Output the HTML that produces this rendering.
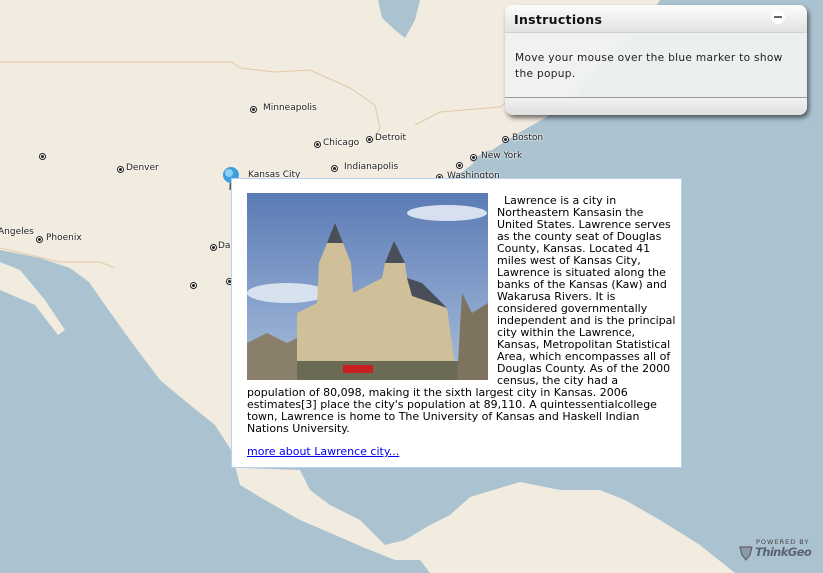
<!DOCTYPE html>
<html><head><meta charset="utf-8"><style>
body{margin:0;width:823px;height:573px;overflow:hidden;position:relative;background:#abc3d0;font-family:"DejaVu Sans","Liberation Sans",sans-serif}
.c{position:absolute;font-size:9px;color:#222;white-space:nowrap;text-shadow:0 0 2px #fff,0 0 2px #fff}
.d{position:absolute;width:5px;height:5px;border:1.5px solid #222;border-radius:50%;background:#fff}
.d:after{content:"";position:absolute;left:1px;top:1px;width:3px;height:3px;border-radius:50%;background:#222}
#pop{position:absolute;left:231px;top:178px;width:449px;height:288px;background:#fff;border:1px solid #b9d2ee}
.t{position:absolute;font-size:11px;color:#000;white-space:nowrap;line-height:12px}
#ins{position:absolute;left:505px;top:5px;width:302px;height:110px;border-radius:8px;box-shadow:2px 3px 5px rgba(0,0,0,.55);overflow:hidden;background:rgba(240,242,242,.93)}
</style></head><body>
<svg width="823" height="573" style="position:absolute;left:0;top:0">
<path fill="#f2ebdf" d="M0,0 L660,0 L640,30 L605,60 L575,95 L545,118 L515,135 L495,148 L478,160 L462,172 L445,180 L500,200 L500,460 L231,450 L215,425 L190,405 L160,380 L130,340 L105,305 L89,282 L70,268 L40,258 L0,250 Z"/>
<path fill="#f2ebdf" d="M0,262 L20,270 L45,300 L65,330 L58,335 L35,305 L0,290 Z"/>
<path fill="#f2ebdf" d="M231,450 L245,468 L300,470 L310,490 L330,505 L360,520 L385,545 L405,540 L430,525 L450,515 L470,497 L520,482 L560,490 L600,490 L625,500 L660,520 L700,545 L735,573 L430,573 L420,560 L395,560 L365,548 L335,535 L300,520 L265,500 L240,485 Z"/>
<path fill="#abc3d0" d="M378,0 L420,0 L415,20 L405,38 L395,30 L382,18 Z"/>
<path fill="#abc3d0" d="M470,160 L490,150 L500,158 L480,168 Z"/>
<path fill="none" stroke="#e2c9a4" stroke-width="1" d="M0,62 L232,62 L240,68 L275,72 L310,70 L350,88 L375,105 L380,128 L372,142 M415,125 L440,112 L500,107 L510,100 M0,248 L60,262 L100,262 L115,268"/>
</svg>

<div class="d" style="left:39px;top:153px"></div>
<div class="d" style="left:250px;top:106px"></div><div class="c" style="left:263px;top:103px">Minneapolis</div>
<div class="d" style="left:314px;top:141px"></div><div class="c" style="left:323px;top:138px">Chicago</div>
<div class="d" style="left:366px;top:136px"></div><div class="c" style="left:375px;top:133px">Detroit</div>
<div class="d" style="left:117px;top:166px"></div><div class="c" style="left:126px;top:163px">Denver</div>
<div class="d" style="left:331px;top:165px"></div><div class="c" style="left:344px;top:162px">Indianapolis</div>
<div class="c" style="left:248px;top:170px">Kansas City</div>
<div class="c" style="left:-2px;top:227px">Angeles</div>
<div class="d" style="left:36px;top:236px"></div><div class="c" style="left:46px;top:233px">Phoenix</div>
<div class="d" style="left:210px;top:244px"></div><div class="c" style="left:218px;top:241px">Da</div>
<div class="d" style="left:190px;top:282px"></div>
<div class="d" style="left:226px;top:278px"></div>
<div class="d" style="left:502px;top:136px"></div><div class="c" style="left:512px;top:133px">Boston</div>
<div class="d" style="left:470px;top:154px"></div><div class="c" style="left:481px;top:151px">New York</div>
<div class="d" style="left:456px;top:162px"></div>
<div class="d" style="left:436px;top:174px"></div><div class="c" style="left:447px;top:171px">Washington</div>

<svg width="20" height="26" style="position:absolute;left:221px;top:166px"><path d="M10,10 L9,24" stroke="#555" stroke-width="1.5"/><circle cx="10" cy="9" r="8" fill="#3d9ee0"/><circle cx="8" cy="7" r="4" fill="#8fd0f5"/></svg>

<div id="pop">
<svg width="241" height="187" style="position:absolute;left:15px;top:14px">
<defs><linearGradient id="sk" x1="0" y1="0" x2="0" y2="1"><stop offset="0" stop-color="#5b7bb5"/><stop offset="1" stop-color="#a9bedc"/></linearGradient></defs>
<rect width="241" height="187" fill="url(#sk)"/>
<ellipse cx="200" cy="20" rx="40" ry="8" fill="#d6e0ee"/><ellipse cx="40" cy="100" rx="40" ry="10" fill="#d8e2ef"/>
<path fill="#cfc09a" d="M50,187 L50,120 L70,110 L72,70 L80,50 L88,42 L96,50 L104,70 L106,100 L135,85 L138,70 L148,55 L158,70 L160,85 L200,115 L210,187 Z"/>
<path fill="#4a4e58" d="M80,50 L88,30 L96,50 Z M138,70 L147,48 L158,70 Z M160,85 L175,90 L200,115 L165,103 Z"/>
<rect x="0" y="168" width="241" height="19" fill="#6a6a55"/><rect x="96" y="172" width="30" height="8" fill="#c82020"/>
<path d="M0,150 L20,140 L40,150 L50,145 L50,187 L0,187Z" fill="#8a7f6a"/>
<path d="M210,187 L215,100 L225,120 L241,110 L241,187Z" fill="#7e735f"/>
</svg>
<div class="t" style="left:265px;top:16px">&nbsp;&nbsp;Lawrence is a city in<br>Northeastern Kansasin the<br>United States. Lawrence serves<br>as the county seat of Douglas<br>County, Kansas. Located 41<br>miles west of Kansas City,<br>Lawrence is situated along the<br>banks of the Kansas (Kaw) and<br>Wakarusa Rivers. It is<br>considered governmentally<br>independent and is the principal<br>city within the Lawrence,<br>Kansas, Metropolitan Statistical<br>Area, which encompasses all of<br>Douglas County. As of the 2000<br>census, the city had a</div>
<div class="t" style="left:15px;top:208px">population of 80,098, making it the sixth largest city in Kansas. 2006<br>estimates[3] place the city's population at 89,110. A quintessentialcollege<br>town, Lawrence is home to The University of Kansas and Haskell Indian<br>Nations University.</div>
<div class="t" style="left:15px;top:267px;color:#0000ee;text-decoration:underline">more about Lawrence city...</div>
</div>

<div id="ins">
<div style="height:27px;background:linear-gradient(#fdfdfd,#e2e2e2);border-bottom:1px solid #d0d0d0;position:relative">
<div style="position:absolute;left:9px;top:7px;font-size:12.5px;font-weight:bold;color:#111;letter-spacing:.3px">Instructions</div>
<div style="position:absolute;left:266px;top:5px;width:14px;height:14px;border-radius:50%;background:#fff"><div style="position:absolute;left:3px;top:6px;width:8px;height:2px;background:#666"></div></div>
</div>
<div style="position:absolute;left:10px;top:45px;font-size:10.6px;line-height:16px;color:#222;letter-spacing:.3px">Move your mouse over the blue marker to show<br>the popup.</div>
<div style="position:absolute;left:0;top:92px;width:302px;height:18px;border-top:1px solid #999;background:linear-gradient(#f2f2f2,#dedede)"></div>
</div>

<div style="position:absolute;left:756px;top:538px;font-size:6.5px;letter-spacing:1px;color:#444">POWERED BY</div>
<svg width="14" height="16" style="position:absolute;left:739px;top:545px"><path d="M1,2 L13,2 L11,10 L7,15 L3,10 Z" fill="#8a9aa8" stroke="#555"/></svg>
<div style="position:absolute;left:755px;top:545px;font-size:11.5px;font-weight:bold;font-style:italic;color:#5a6470;letter-spacing:-.6px">ThinkGeo</div>
</body></html>
